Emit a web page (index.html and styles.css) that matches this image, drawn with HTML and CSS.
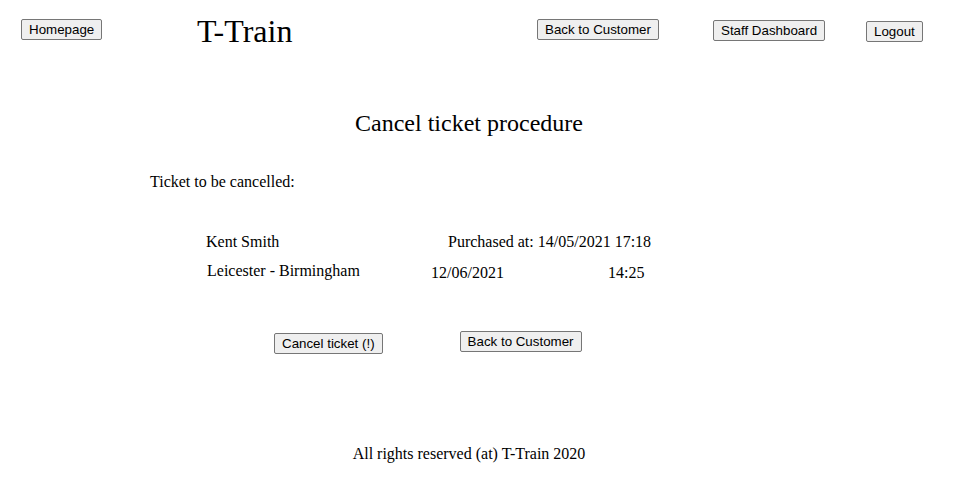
FILE: index.html
```html
<!DOCTYPE html>
<html>
<head>
<meta charset="utf-8">
<title>T-Train</title>
<link rel="stylesheet" href="styles.css">
</head>
<body>
<header class="topbar">
  <div class="nav-cell"><button class="btn btn-home">Homepage</button></div>
  <div class="nav-cell"><h1 class="brand">T-Train</h1></div>
  <div class="nav-cell"><button class="btn btn-back-top">Back to Customer</button></div>
  <div class="nav-cell"><button class="btn btn-staff">Staff Dashboard</button></div>
  <div class="nav-cell"><button class="btn btn-logout">Logout</button></div>
</header>
<main class="content">
  <h2 class="page-title">Cancel ticket procedure</h2>
  <p class="intro">Ticket to be cancelled:</p>
  <div class="ticket">
    <div class="ticket-row row-one">
      <span class="cell name">Kent Smith</span>
      <span class="cell purchased">Purchased at: 14/05/2021 17:18</span>
    </div>
    <div class="ticket-row row-two">
      <span class="cell route">Leicester - Birmingham</span>
      <span class="cell date">12/06/2021</span>
      <span class="cell time">14:25</span>
    </div>
  </div>
  <div class="actions">
    <button class="btn btn-cancel">Cancel ticket (!)</button>
    <button class="btn btn-back">Back to Customer</button>
  </div>
</main>
<footer class="footer">All rights reserved (at) T-Train 2020</footer>
</body>
</html>
```

FILE: styles.css
```css
html, body {
  margin: 0;
  padding: 0;
  background: #ffffff;
}
body {
  font-family: "Liberation Serif", "Times New Roman", serif;
  font-size: 16px;
  color: #000000;
  width: 961px;
}
.btn {
  font-family: "Liberation Sans", Arial, sans-serif;
  font-size: 13.333px;
  line-height: 15px;
  color: #000000;
  background: #efefef;
  border: 1px solid #767676;
  border-radius: 2px;
  padding: 2px 7px;
  margin: 0;
  cursor: default;
}
.topbar {
  display: grid;
  grid-template-columns: 176px 340px 176px 153px auto;
  align-items: start;
  padding: 13px 0 0 21px;
  height: 50px;
  box-sizing: border-box;
}
.brand {
  margin: 0;
  font-size: 32px;
  font-weight: normal;
  line-height: 36px;
}
.btn-home, .btn-back-top { margin-top: 6px; }
.btn-staff { margin-top: 7px; }
.btn-logout { margin-top: 8px; }

.content {
  width: 938px;
  padding-top: 59px;
}
.page-title {
  margin: 0;
  text-align: center;
  font-size: 24px;
  font-weight: normal;
  line-height: 28px;
}
.intro {
  margin: 36px 0 0 150px;
  line-height: 18px;
}
.ticket {
  margin-top: 42px;
}
.ticket-row {
  display: flex;
  line-height: 18px;
}
.row-one {
  padding-left: 206px;
}
.name { width: 242px; }
.row-two {
  padding-left: 207px;
  margin-top: 11px;
}
.route { width: 224px; }
.date { width: 177px; padding-top: 2px; }
.time { padding-top: 2px; }

.actions {
  display: flex;
  align-items: flex-start;
  padding-left: 274px;
  margin-top: 49px;
}
.btn-cancel { margin-top: 2px; }
.btn-back { margin-left: 77px; }

.footer {
  width: 938px;
  text-align: center;
  margin-top: 91px;
  line-height: 18px;
}
```
